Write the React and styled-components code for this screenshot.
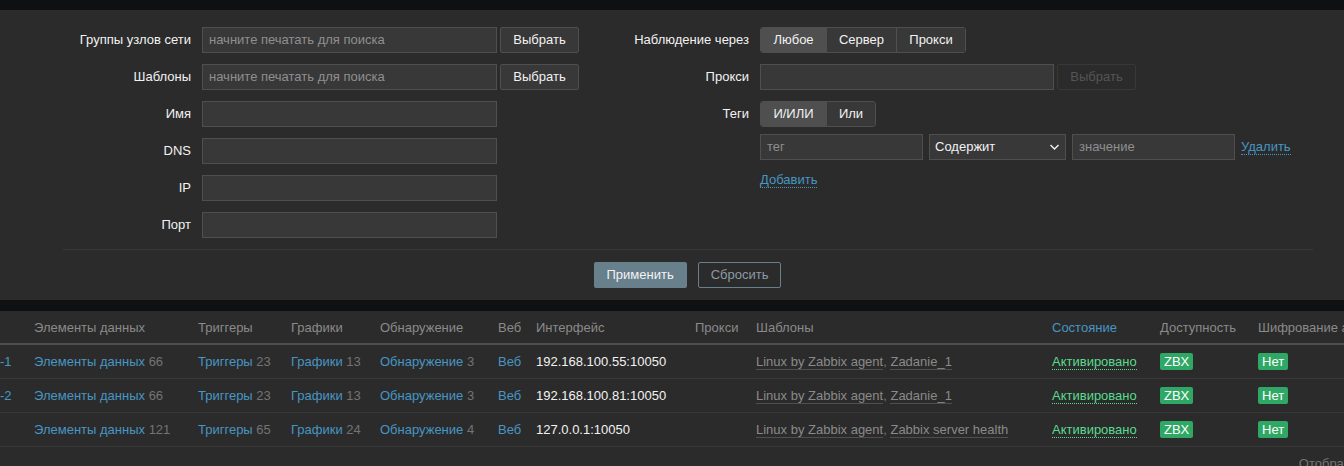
import React from "react";
import styled, { createGlobalStyle } from "styled-components";

const GlobalStyle = createGlobalStyle`
    html, body {
        margin: 0;
        padding: 0;
        background-color: #0e1012;
        font-family: "Liberation Sans", Arial, sans-serif;
        font-size: 13px;
        color: #f2f2f2;
    }
    * { box-sizing: border-box; }
`;

const Page = styled.div`
    width: 1344px;
    height: 466px;
    overflow: hidden;
    padding-top: 10px;
    display: flex;
    flex-direction: column;
    gap: 11px;
`;

const FilterPanel = styled.div`
    background-color: #2b2b2b;
    padding-top: 17px;
    height: 290px;
    flex-shrink: 0;
`;

const Columns = styled.div`
    display: flex;
    align-items: flex-start;
`;

const FormList = styled.div`
    display: grid;
    grid-template-columns: ${props => props.labelWidth}px auto;
    column-gap: 11px;
    row-gap: 11px;
    width: ${props => props.width ? props.width + "px" : "auto"};
    align-items: start;
    align-content: start;
`;

const Label = styled.div`
    text-align: right;
    height: 26px;
    line-height: 26px;
    color: #f2f2f2;
    white-space: nowrap;
`;

const Field = styled.div`
    display: flex;
    gap: ${props => props.gap || 3}px;
    align-items: center;
`;

const Input = styled.div`
    width: ${props => props.w}px;
    height: 26px;
    line-height: 24px;
    padding: 0 6px;
    background-color: #383838;
    border: 1px solid #4f4f4f;
    color: #8f8f8f;
    white-space: nowrap;
    overflow: hidden;
`;

const Button = styled.div`
    height: 26px;
    line-height: 24px;
    border-radius: 2px;
    border: 1px solid ${props => props.disabled ? "#383838" : "#4f4f4f"};
    background-color: ${props => props.disabled ? "#2b2b2b" : "#383838"};
    color: ${props => props.disabled ? "#555555" : "#f2f2f2"};
    text-align: center;
    width: ${props => props.w}px;
`;

const Radio = styled.div`
    display: flex;
    border: 1px solid #4f4f4f;
    border-radius: 3px;
    overflow: hidden;
    height: 26px;
`;

const RadioItem = styled.div`
    height: 24px;
    line-height: 24px;
    width: ${props => props.w}px;
    text-align: center;
    background-color: ${props => props.active ? "#4f4f4f" : "#383838"};
    border-left: ${props => props.first ? "none" : "1px solid #4f4f4f"};
`;

const TagBlock = styled.div`
    display: flex;
    flex-direction: column;
    gap: 7px;
`;

const Select = styled.div`
    width: ${props => props.w}px;
    height: 26px;
    line-height: 24px;
    padding: 0 5px;
    background-color: #383838;
    border: 1px solid #4f4f4f;
    display: flex;
    justify-content: space-between;
    align-items: center;
`;

const DottedLink = styled.span`
    color: ${props => props.color || "#4796c4"};
    border-bottom: 1px dotted ${props => props.color || "#4796c4"};
    line-height: 15px;
`;

const AddRow = styled.div`
    height: 26px;
    display: flex;
    align-items: center;
`;

const Separator = styled.div`
    margin: 11px 31px 0 63px;
    border-top: 1px solid #383838;
`;

const Actions = styled.div`
    display: flex;
    justify-content: center;
    gap: 11px;
    padding-top: 12px;
    padding-left: 31px;
`;

const ApplyButton = styled.div`
    height: 26px;
    line-height: 26px;
    padding: 0 13px;
    border-radius: 2px;
    background-color: #687f8c;
    color: #f2f2f2;
`;

const ResetButton = styled.div`
    height: 26px;
    line-height: 24px;
    padding: 0 12px;
    border-radius: 2px;
    border: 1px solid #687f8c;
    color: #8b9ba5;
`;

const TableWrap = styled.div`
    background-color: #2b2b2b;
    flex: 1;
    overflow: hidden;
`;

const Table = styled.table`
    width: 1470px;
    table-layout: fixed;
    border-collapse: collapse;
`;

const Th = styled.th`
    text-align: left;
    font-weight: normal;
    color: ${props => props.link ? "#4796c4" : "#8a8a8a"};
    height: 33px;
    padding: 0 5px;
    border-bottom: 2px solid #4f4f4f;
    white-space: nowrap;
    overflow: hidden;
    &:first-child { padding-left: 0; }
`;

const Td = styled.td`
    height: 34px;
    padding: 1px 5px 0;
    border-bottom: 1px solid #383838;
    white-space: nowrap;
    overflow: hidden;
    color: #f2f2f2;
    &:first-child { padding-left: 0; }
`;

const Link = styled.span`
    color: #4796c4;
`;

const Count = styled.span`
    color: #737373;
`;

const TemplateLink = styled.span`
    color: #8a8a8a;
    border-bottom: 1px solid #4f4f4f;
`;

const Badge = styled.span`
    display: inline-block;
    background-color: #2fa866;
    color: #ffffff;
    padding: 1px 4px;
    line-height: 15px;
    border-radius: 2px;
`;

const Footer = styled.div`
    width: 1488px;
    text-align: right;
    padding: 9px 5px 0 0;
    color: #737373;
`;

const Chevron = () => (
    <svg width="11" height="8" viewBox="0 0 11 8">
        <path d="M1.5 2 L5.5 6 L9.5 2" fill="none" stroke="#f2f2f2" strokeWidth="1.4" />
    </svg>
);

const widths = [29, 164, 93, 89, 118, 38, 159, 61, 296, 108, 98, 217];

const rows = [
    { name: "-1", items: 66, triggers: 23, graphs: 13, discovery: 3, iface: "192.168.100.55:10050", tpl: "Zadanie_1" },
    { name: "-2", items: 66, triggers: 23, graphs: 13, discovery: 3, iface: "192.168.100.81:10050", tpl: "Zadanie_1" },
    { name: "", items: 121, triggers: 65, graphs: 24, discovery: 4, iface: "127.0.0.1:10050", tpl: "Zabbix server health" },
];

export default function App() {
    return (
        <Page>
            <GlobalStyle />
            <FilterPanel>
                <Columns>
                    <FormList labelWidth={191} width={590}>
                        <Label>Группы узлов сети</Label>
                        <Field>
                            <Input w={295}>начните печатать для поиска</Input>
                            <Button w={79}>Выбрать</Button>
                        </Field>
                        <Label>Шаблоны</Label>
                        <Field>
                            <Input w={295}>начните печатать для поиска</Input>
                            <Button w={79}>Выбрать</Button>
                        </Field>
                        <Label>Имя</Label>
                        <Field><Input w={295} /></Field>
                        <Label>DNS</Label>
                        <Field><Input w={295} /></Field>
                        <Label>IP</Label>
                        <Field><Input w={295} /></Field>
                        <Label>Порт</Label>
                        <Field><Input w={295} /></Field>
                    </FormList>
                    <FormList labelWidth={159}>
                        <Label>Наблюдение через</Label>
                        <Field>
                            <Radio>
                                <RadioItem w={65} active first>Любое</RadioItem>
                                <RadioItem w={70}>Сервер</RadioItem>
                                <RadioItem w={69}>Прокси</RadioItem>
                            </Radio>
                        </Field>
                        <Label>Прокси</Label>
                        <Field>
                            <Input w={294} />
                            <Button w={79} disabled>Выбрать</Button>
                        </Field>
                        <Label>Теги</Label>
                        <TagBlock>
                            <Field>
                                <Radio>
                                    <RadioItem w={65} active first>И/ИЛИ</RadioItem>
                                    <RadioItem w={49}>Или</RadioItem>
                                </Radio>
                            </Field>
                            <Field gap={6}>
                                <Input w={163}>тег</Input>
                                <Select w={137}>
                                    <span>Содержит</span>
                                    <Chevron />
                                </Select>
                                <Input w={163}>значение</Input>
                                <DottedLink>Удалить</DottedLink>
                            </Field>
                            <AddRow>
                                <DottedLink>Добавить</DottedLink>
                            </AddRow>
                        </TagBlock>
                    </FormList>
                </Columns>
                <Separator />
                <Actions>
                    <ApplyButton>Применить</ApplyButton>
                    <ResetButton>Сбросить</ResetButton>
                </Actions>
            </FilterPanel>
            <TableWrap>
                <Table>
                    <colgroup>
                        {widths.map((w, i) => <col key={i} style={{ width: w }} />)}
                    </colgroup>
                    <thead>
                        <tr>
                            <Th></Th>
                            <Th>Элементы данных</Th>
                            <Th>Триггеры</Th>
                            <Th>Графики</Th>
                            <Th>Обнаружение</Th>
                            <Th>Веб</Th>
                            <Th>Интерфейс</Th>
                            <Th>Прокси</Th>
                            <Th>Шаблоны</Th>
                            <Th link>Состояние</Th>
                            <Th>Доступность</Th>
                            <Th>Шифрование агента</Th>
                        </tr>
                    </thead>
                    <tbody>
                        {rows.map((r, i) => (
                            <tr key={i}>
                                <Td><Link>{r.name}</Link></Td>
                                <Td><Link>Элементы данных</Link> <Count>{r.items}</Count></Td>
                                <Td><Link>Триггеры</Link> <Count>{r.triggers}</Count></Td>
                                <Td><Link>Графики</Link> <Count>{r.graphs}</Count></Td>
                                <Td><Link>Обнаружение</Link> <Count>{r.discovery}</Count></Td>
                                <Td><Link>Веб</Link></Td>
                                <Td>{r.iface}</Td>
                                <Td></Td>
                                <Td><TemplateLink>Linux by Zabbix agent</TemplateLink><Count>, </Count><TemplateLink>{r.tpl}</TemplateLink></Td>
                                <Td><DottedLink color="#59db8f">Активировано</DottedLink></Td>
                                <Td><Badge>ZBX</Badge></Td>
                                <Td><Badge>Нет</Badge></Td>
                            </tr>
                        ))}
                    </tbody>
                </Table>
                <Footer>Отображено 3 из 3 найденных</Footer>
            </TableWrap>
        </Page>
    );
}
